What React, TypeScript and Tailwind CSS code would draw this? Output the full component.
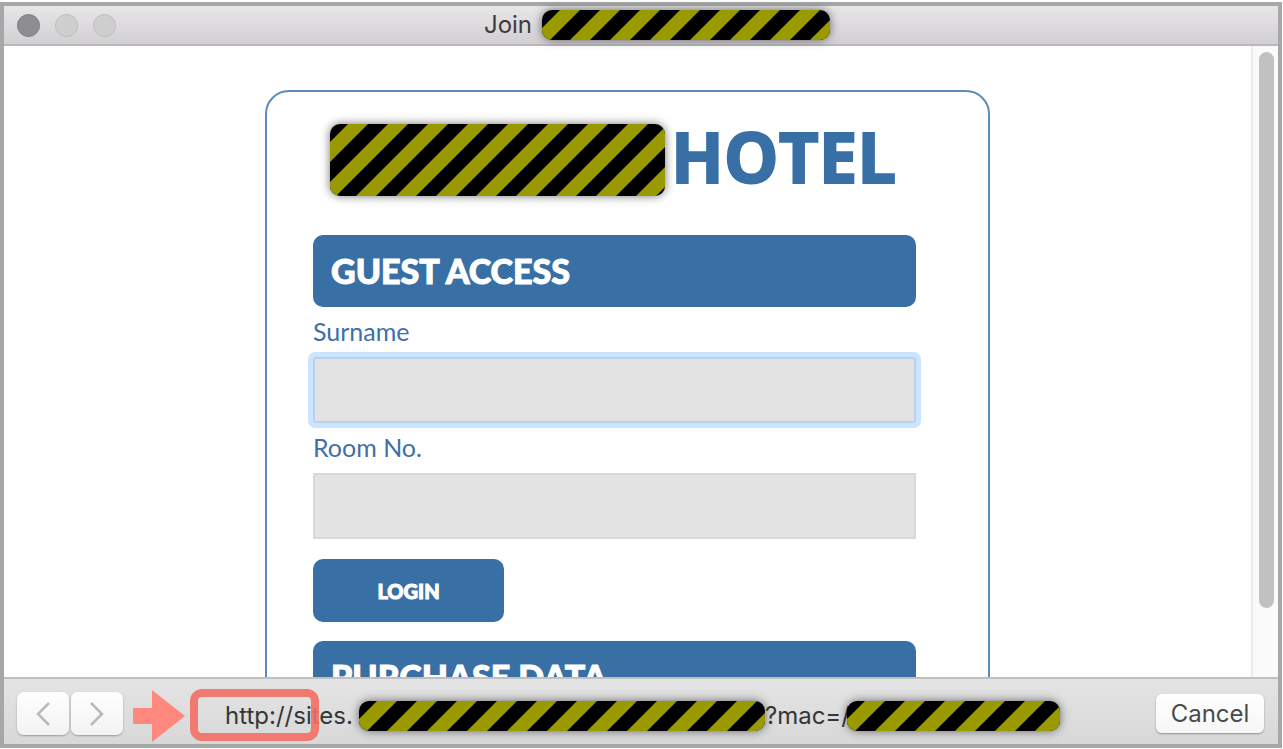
import { useId, type ReactNode } from "react";

function Redacted({ className = "" }: { className?: string }) {
  const id = useId();
  return (
    <span className={`block shrink-0 overflow-hidden bg-black shadow-[0_0_10px_rgba(0,0,0,0.55)] ${className}`}>
      <svg className="block h-full w-full" aria-hidden="true">
        <defs>
          <pattern id={id} width={40} height={40} patternUnits="userSpaceOnUse">
            <path d="M18 0H38L0 38V18ZM40 18V38L38 40H18Z" fill="#999900" />
          </pattern>
        </defs>
        <rect width="100%" height="100%" fill={`url(#${id})`} />
      </svg>
    </span>
  );
}

function TitleBar() {
  return (
    <header className="relative flex h-10 shrink-0 items-center justify-center border-b-2 border-[#b9b8ba] bg-linear-to-b from-[#e9e6e9] to-[#d2cfd2] pl-8">
      <div className="absolute left-[13px] flex gap-[15px]">
        <button type="button" aria-label="Close" className="size-[23px] rounded-full border border-[#7e7d82] bg-[#8e8d92]" />
        <button type="button" aria-label="Minimize" className="size-[23px] rounded-full border border-[#bdbcbd] bg-[#d0cfd0]" />
        <button type="button" aria-label="Zoom" className="size-[23px] rounded-full border border-[#bdbcbd] bg-[#d0cfd0]" />
      </div>
      <h1 className="flex items-center gap-[10px] text-2xl text-[#3c3a3e]">
        Join
        <Redacted className="h-[30px] w-[288px] rounded-[10px]" />
      </h1>
    </header>
  );
}

function SectionTitle({ children }: { children: ReactNode }) {
  return (
    <h2 className="flex h-[72px] items-center rounded-[10px] bg-[#3870a6] px-[18px] pb-[2px] text-[34px] font-black text-white [-webkit-text-stroke:1px_white]">
      {children}
    </h2>
  );
}

function Field({ id, label, active = false }: { id: string; label: string; active?: boolean }) {
  return (
    <div>
      <label htmlFor={id} className="flex h-[50px] items-center text-[25px] text-[#3f6fa8]">
        {label}
      </label>
      <input
        id={id}
        type="text"
        className={`block h-[66px] w-full border-2 bg-[#e3e3e3] px-4 text-[25px] ${
          active ? "rounded-[2px] border-[#b9d0e8] outline-[5px] outline-[#cbe5ff]" : "border-[#d9d9d9] outline-none"
        }`}
      />
    </div>
  );
}

function LoginCard() {
  return (
    <form
      className="mx-auto mt-11 w-full max-w-[725px] rounded-[24px] border-2 border-[#5a8cbb] pt-8 pr-[72px] pl-[46px] font-['Lato',sans-serif]"
      onSubmit={(e) => e.preventDefault()}
    >
      <div className="mb-[39px] flex h-[72px] items-start gap-[6px] pl-[17px]">
        <Redacted className="h-[72px] w-[335px] rounded-[10px]" />
        <span className="font-['Open_Sans',sans-serif] text-[69px] leading-[64px] font-bold text-[#3870a6] [-webkit-text-stroke:2px_#3870a6]">
          HOTEL
        </span>
      </div>
      <SectionTitle>GUEST ACCESS</SectionTitle>
      <Field id="surname" label="Surname" active />
      <Field id="room" label="Room No." />
      <button
        type="submit"
        className="mt-5 mb-[19px] block h-[63px] w-[191px] rounded-[10px] bg-[#3870a6] text-xl font-black text-white [-webkit-text-stroke:1px_white]"
      >
        LOGIN
      </button>
      <SectionTitle>PURCHASE DATA</SectionTitle>
    </form>
  );
}

function NavButton({ label, points }: { label: string; points: string }) {
  return (
    <button
      type="button"
      aria-label={label}
      className="flex h-[43px] w-[52px] items-center justify-center rounded-[7px] bg-linear-to-b from-[#fefefe] to-[#f3f3f3] shadow-[0_1px_2px_rgba(0,0,0,0.3)]"
    >
      <svg width={14} height={24} viewBox="0 0 14 24" fill="none" stroke="#b9b9b9" strokeWidth={2.5}>
        <polyline points={points} />
      </svg>
    </button>
  );
}

function BottomBar() {
  return (
    <footer className="relative flex h-[67px] shrink-0 items-center border-t-2 border-[#c0c0c0] bg-linear-to-b from-[#e4e4e4] to-[#d8d8d8] pt-1 pr-[14px] pl-[13px] text-2xl">
      <div className="flex gap-[2px]">
        <NavButton label="Back" points="13,1 2,12 13,23" />
        <NavButton label="Forward" points="1,1 12,12 1,23" />
      </div>
      <svg className="mt-1 ml-[10px] shrink-0" width={52} height={52} viewBox="0 0 52 52" aria-hidden="true">
        <path d="M0 18H19V0L52 26L19 52V34H0Z" fill="#ff887e" />
      </svg>
      <div className="mt-1 ml-10 flex items-center text-[#363636]">
        <span className="mr-[6px]">http://sites.</span>
        <Redacted className="h-[30px] w-[406px] rounded-[10px]" />
        <span>?mac=/</span>
        <Redacted className="relative -ml-[3px] h-[30px] w-[213px] rounded-[10px]" />
      </div>
      <button
        type="button"
        className="ml-auto h-[39px] w-[108px] rounded-[6px] bg-linear-to-b from-white to-[#f6f6f6] text-[#4a4a4a] shadow-[0_1px_2px_rgba(0,0,0,0.35)]"
      >
        Cancel
      </button>
      {/* marker around the scheme of the address */}
      <span className="absolute top-[10px] left-[186px] h-[52px] w-[129px] rounded-[12px] border-8 border-[#f36e64]/90" />
    </footer>
  );
}

export default function App() {
  return (
    <div className="h-screen bg-white pt-[2px] pr-px pb-px font-['Inter',sans-serif]">
      <div className="flex h-full flex-col border-4 border-[#a6a8a7]">
        <TitleBar />
        <main className="flex min-h-0 flex-1 overflow-hidden bg-white">
          <div className="min-w-0 flex-1 overflow-hidden">
            <LoginCard />
          </div>
          <div className="w-[27px] shrink-0 border-l-2 border-[#ececec] bg-[#fafafa] pt-[6px] pl-[6px]">
            <div className="h-[89%] w-[15px] rounded-full bg-[#c1c1c1]" />
          </div>
        </main>
        <BottomBar />
      </div>
    </div>
  );
}
